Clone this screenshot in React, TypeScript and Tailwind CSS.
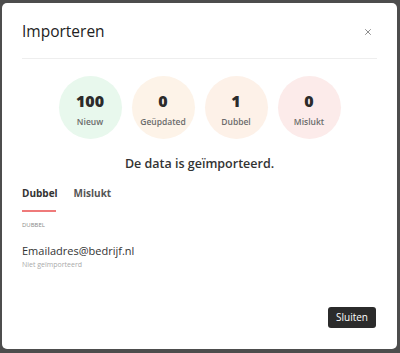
import { X } from "lucide-react"

const stats = [
  { value: "100", label: "Nieuw", bg: "bg-[#e8f8ed]" },
  { value: "0", label: "Geüpdated", bg: "bg-[#fdf3e8]" },
  { value: "1", label: "Dubbel", bg: "bg-[#fdf1e8]" },
  { value: "0", label: "Mislukt", bg: "bg-[#fcebea]" },
]

export default function App() {
  return (
    <div className="w-[400px] h-[353px] bg-[#4d4d4d] pt-[3px] pl-[2px] font-['Open_Sans',sans-serif]">
      <div className="w-[395px] h-[346px] bg-white rounded-[5px] flex flex-col px-[20px]">
        <div className="flex items-center justify-between h-[56px] pt-[3px] border-b border-[#eeeeee]">
          <h2 className="text-[15.5px] text-[#222222]">Importeren</h2>
          <button className="text-[#777777] mr-[4px]">
            <X size={10} strokeWidth={2} />
          </button>
        </div>

        <div className="flex justify-center gap-[10px] mt-[17px]">
          {stats.map((s) => (
            <div
              key={s.label}
              className={`w-[63px] h-[63px] rounded-full ${s.bg} flex flex-col items-center justify-center`}
            >
              <span className="text-[16px] font-extrabold leading-[20px] text-[#2b2b2b] mt-[4px]">{s.value}</span>
              <span className="text-[8.5px] font-semibold text-[#6b6b6b] mt-[5px]">{s.label}</span>
            </div>
          ))}
        </div>

        <p className="text-center text-[12.5px] font-semibold text-[#333333] mt-[16px]">
          De data is geïmporteerd.
        </p>

        <div className="flex gap-[16px] mt-[12px]">
          <div className="flex flex-col">
            <span className="text-[10px] font-bold text-[#333333] pb-[9px]">Dubbel</span>
            <span className="h-[2px] bg-[#ef7a7a] w-[34px]" />
          </div>
          <span className="text-[10px] font-bold text-[#555555]">Mislukt</span>
        </div>

        <span className="text-[6px] text-[#888888] mt-[9px]">DUBBEL</span>

        <span className="text-[11px] text-[#333333] mt-[13px] leading-[16px]">Emailadres@bedrijf.nl</span>
        <span className="text-[7px] text-[#aaaaaa] mt-[1px]">Niet geïmporteerd</span>

        <div className="flex justify-end mt-[37px]">
          <button className="bg-[#2b2b2b] text-white text-[10px] rounded-[3px] w-[48px] h-[21px] mr-[1px]">
            Sluiten
          </button>
        </div>
      </div>
    </div>
  )
}
